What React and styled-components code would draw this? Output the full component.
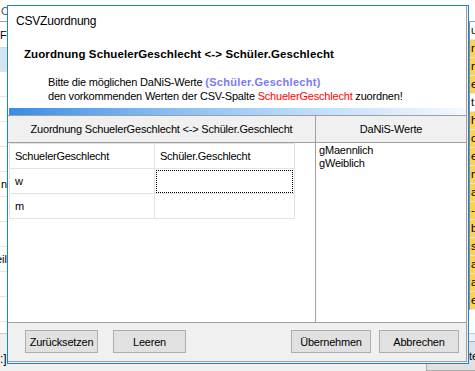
import styled, { createGlobalStyle } from "styled-components";

const GlobalStyle = createGlobalStyle`
  html, body {
    margin: 0;
    padding: 0;
    background: #f0f0f0;
    overflow: hidden;
  }
  body {
    font-family: "Liberation Sans", Arial, sans-serif;
    color: #000;
  }
`;

const leftRows = [
  { h: 25, text: "Fe", line: "#d9d9d9" },
  { h: 23, bg: "#d5e4f3" },
  { h: 24 },
  { h: 24 },
  { h: 24 },
  { h: 24 },
  { h: 24, text: "n", end: true },
  { h: 24 },
  { h: 24 },
  { h: 24, text: "eil", end: true },
  { h: 24 },
  { h: 24 },
  { h: 24 },
];

const rightRows = [
  "rin", "n4", "eb", "t", "hil", "ce", "e", "nr", "ar", "-C", "bli", "st", "a", "a", "el",
];

const gridRows = [
  { key: "SchuelerGeschlecht", value: "Schüler.Geschlecht" },
  { key: "w", value: "", focus: true },
  { key: "m", value: "" },
];

export default function App() {
  return (
    <>
      <GlobalStyle />
      <Desktop>
        <BackWindow>
          <BackTop>
            <SideList>
              <SideTop>C</SideTop>
              {leftRows.map((row, i) => (
                <SideRow key={i} $h={row.h} $bg={row.bg} $line={row.line} $end={row.end}>
                  {row.text}
                </SideRow>
              ))}
            </SideList>
            <BackMiddle />
            <SideGrid>
              <SideTop />
              <GridBody>
                <GridRow $yellow={false}>ue</GridRow>
                {rightRows.map((text, i) => (
                  <GridRow key={i} $yellow={text !== "t"}>
                    {text}
                  </GridRow>
                ))}
              </GridBody>
            </SideGrid>
          </BackTop>
          <BackFooter>
            <FooterText>:]</FooterText>
            <BackButton>Weiter</BackButton>
          </BackFooter>
        </BackWindow>

        <Dialog>
          <Frame>
            <TitleBar>CSVZuordnung</TitleBar>
            <Intro>
              <Heading>Zuordnung SchuelerGeschlecht &lt;-&gt; Schüler.Geschlecht</Heading>
              <Hint>
                Bitte die möglichen DaNiS-Werte <Target>(Schüler.Geschlecht)</Target>
                <br />
                den vorkommenden Werten der CSV-Spalte <Source>SchuelerGeschlecht</Source> zuordnen!
              </Hint>
            </Intro>
            <GradientBar />
            <Main>
              <LeftPane>
                <PaneHeader>Zuordnung SchuelerGeschlecht &lt;-&gt; Schüler.Geschlecht</PaneHeader>
                <PaneBody>
                  <MapGrid>
                    {gridRows.map((row) => [
                      <Cell key={row.key + "-k"}>{row.key}</Cell>,
                      <Cell key={row.key + "-v"} $focus={row.focus}>
                        {row.value}
                      </Cell>,
                    ])}
                  </MapGrid>
                </PaneBody>
              </LeftPane>
              <RightPane>
                <PaneHeader>DaNiS-Werte</PaneHeader>
                <ValueList>
                  <ValueItem>gMaennlich</ValueItem>
                  <ValueItem>gWeiblich</ValueItem>
                </ValueList>
              </RightPane>
            </Main>
            <ButtonBar>
              <ButtonGroup $gap={15}>
                <Button $w={73}>Zurücksetzen</Button>
                <Button $w={73}>Leeren</Button>
              </ButtonGroup>
              <ButtonGroup $gap={8}>
                <Button $w={80}>Übernehmen</Button>
                <Button $w={80}>Abbrechen</Button>
              </ButtonGroup>
            </ButtonBar>
          </Frame>
        </Dialog>
      </Desktop>
    </>
  );
}

const Desktop = styled.div`
  position: relative;
  width: 475px;
  height: 371px;
  overflow: hidden;
  background: #f0f0f0;
`;

const BackWindow = styled.div`
  display: flex;
  flex-direction: column;
  width: 100%;
  height: 100%;
`;

const BackTop = styled.div`
  flex: 1;
  display: flex;
  background: #fff;
  min-height: 0;
`;

const SideList = styled.div`
  width: 7px;
  display: flex;
  flex-direction: column;
  overflow: hidden;
`;

const SideTop = styled.div`
  height: 21px;
  flex-shrink: 0;
  border-bottom: 1px solid #a0a0a0;
  background: #fff;
  font-size: 11px;
  line-height: 22px;
  color: #555;
  padding-left: 1px;
`;

const SideRow = styled.div`
  height: ${(p) => p.$h}px;
  flex-shrink: 0;
  display: flex;
  align-items: center;
  justify-content: ${(p) => (p.$end ? "flex-end" : "flex-start")};
  white-space: nowrap;
  border-bottom: 1px solid ${(p) => p.$line || "#e4e4e4"};
  background: ${(p) => p.$bg || "#fff"};
  font-size: 11px;
`;

const BackMiddle = styled.div`
  flex: 1;
`;

const SideGrid = styled.div`
  width: 7px;
  display: flex;
  flex-direction: column;
  overflow: hidden;
`;

const GridBody = styled.div`
  border-left: 2px solid #8a8a8a;
  display: flex;
  flex-direction: column;
`;

const GridRow = styled.div`
  height: 17px;
  flex-shrink: 0;
  border-bottom: 1px solid #e8e8e8;
  background: ${(p) => (p.$yellow ? "#fdd24c" : "#fff")};
  font-size: 11px;
  line-height: 17px;
  padding-left: 1px;
  white-space: nowrap;
`;

const BackFooter = styled.div`
  height: 37px;
  border-top: 1px solid #c8c8c8;
  display: flex;
  justify-content: space-between;
  align-items: flex-start;
`;

const FooterText = styled.div`
  font-size: 12px;
  margin-top: 18px;
`;

const BackButton = styled.div`
  width: 80px;
  height: 30px;
  margin-top: 7px;
  margin-right: -31px;
  box-sizing: border-box;
  border: 1px solid #adadad;
  background: #e1e1e1;
  font-size: 11px;
  display: flex;
  align-items: center;
  justify-content: center;
`;

const Dialog = styled.div`
  position: absolute;
  left: 7px;
  top: 5px;
  width: 462px;
  height: 359px;
  box-sizing: border-box;
  border: 1px solid #1883d7;
  background: #f0f0f0;
  display: flex;
`;

const Frame = styled.div`
  flex: 1;
  display: flex;
  flex-direction: column;
  margin: 0 1px 1px 0;
  border-right: 1px solid #a0a0a0;
  border-bottom: 1px solid #a0a0a0;
`;

const TitleBar = styled.div`
  height: 30px;
  line-height: 30px;
  padding-left: 8px;
  background: #fff;
  font-size: 12px;
  letter-spacing: -0.2px;
`;

const Intro = styled.div`
  height: 72px;
  box-sizing: border-box;
  padding: 10px 0 0 16px;
  background: #fff;
`;

const Heading = styled.div`
  font-size: 11.5px;
  font-weight: bold;
  line-height: 16px;
  letter-spacing: 0.1px;
`;

const Hint = styled.div`
  margin: 13px 0 0 24px;
  font-size: 11px;
  line-height: 14px;
  letter-spacing: -0.2px;
`;

const Target = styled.span`
  color: #7a7af5;
  font-weight: bold;
  letter-spacing: 0.3px;
`;

const Source = styled.span`
  color: #ff0000;
`;

const GradientBar = styled.div`
  height: 7px;
  border-left: 1px solid #fff;
  background: linear-gradient(90deg, #3a8ce6 0%, #86bef4 35%, #bcdcfa 65%, #f4f9ff 100%);
`;

const Main = styled.div`
  height: 208px;
  box-sizing: border-box;
  display: flex;
  border-top: 1px solid #a0a0a0;
  border-bottom: 1px solid #a0a0a0;
`;

const LeftPane = styled.div`
  width: 308px;
  box-sizing: border-box;
  border-right: 1px solid #a0a0a0;
  display: flex;
  flex-direction: column;
`;

const RightPane = styled.div`
  flex: 1;
  display: flex;
  flex-direction: column;
`;

const PaneHeader = styled.div`
  height: 26px;
  flex-shrink: 0;
  border-bottom: 1px solid #a0a0a0;
  background: #f0f0f0;
  display: flex;
  align-items: center;
  justify-content: center;
  font-size: 11px;
  letter-spacing: -0.2px;
  white-space: nowrap;
`;

const PaneBody = styled.div`
  flex: 1;
  background: #fff;
  padding-left: 1px;
`;

const MapGrid = styled.div`
  display: grid;
  grid-template-columns: 145px 140px;
  grid-auto-rows: 25px;
  width: max-content;
  border-left: 1px solid #e3e3e3;
  border-top: 1px solid #e3e3e3;
`;

const Cell = styled.div`
  position: relative;
  box-sizing: border-box;
  border-right: 1px solid #e3e3e3;
  border-bottom: 1px solid #e3e3e3;
  padding-left: 5px;
  font-size: 11px;
  line-height: 24px;
  letter-spacing: -0.25px;
  white-space: nowrap;

  ${(p) =>
    p.$focus &&
    `
    &::after {
      content: "";
      position: absolute;
      left: 1px;
      top: 1px;
      right: 1px;
      bottom: 0;
      border: 1px dotted #000;
    }
  `}
`;

const ValueList = styled.div`
  flex: 1;
  background: #fff;
  padding: 1px 0 0 3px;
`;

const ValueItem = styled.div`
  font-size: 11px;
  line-height: 13px;
  letter-spacing: -0.2px;
`;

const ButtonBar = styled.div`
  flex: 1;
  display: flex;
  justify-content: space-between;
  align-items: flex-start;
  padding: 7px 7px 0 17px;
`;

const ButtonGroup = styled.div`
  display: flex;
  gap: ${(p) => p.$gap}px;
`;

const Button = styled.button`
  width: ${(p) => p.$w}px;
  height: 23px;
  padding: 0;
  box-sizing: border-box;
  border: 1px solid #adadad;
  background: #e1e1e1;
  border-radius: 0;
  font-family: "Liberation Sans", Arial, sans-serif;
  font-size: 11px;
  letter-spacing: -0.2px;
  color: #000;
`;
